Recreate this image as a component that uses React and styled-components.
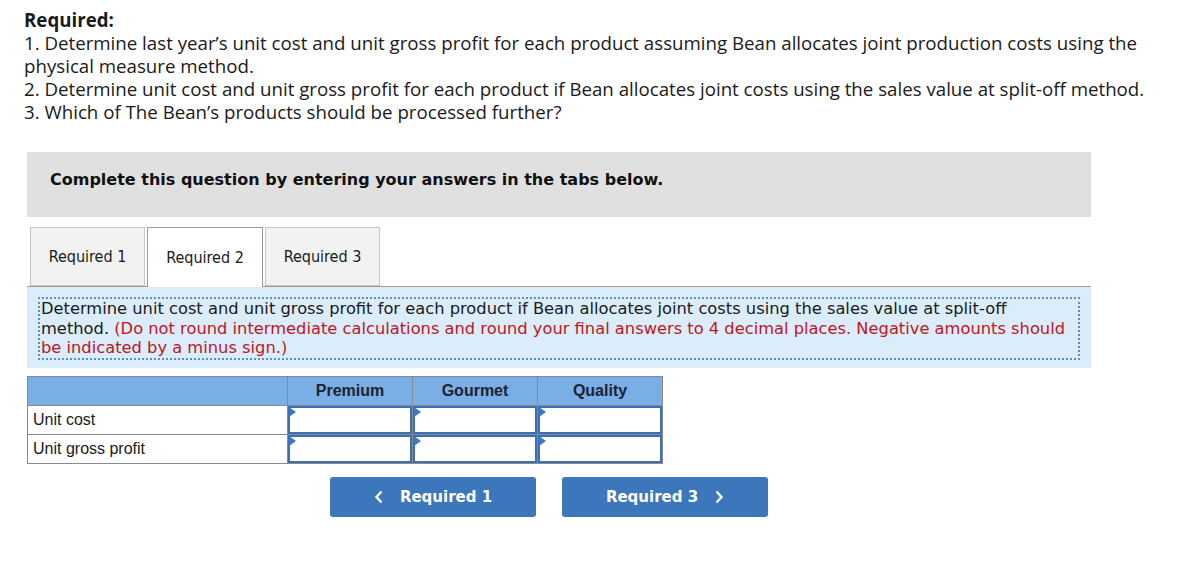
import React from 'react';
import styled, { createGlobalStyle } from 'styled-components';

const GlobalStyle = createGlobalStyle`
  html, body {
    margin: 0;
    background: #ffffff;
  }
  body {
    font-family: "Open Sans", "Lato", sans-serif;
    color: #1a1a1a;
  }
`;

const Page = styled.div`
  padding: 8px 0 0 24px;
`;

const Intro = styled.div`
  width: 1125px;
  font-family: "Open Sans", "Lato", sans-serif;
  font-size: 18.7px;
  line-height: 23px;
  color: #1a1a1a;
`;

const IntroTitle = styled.div`
  font-weight: 700;
`;

const Panel = styled.div`
  margin: 29px 0 0 3px;
  width: 1064px;
`;

const Banner = styled.div`
  background: #e0e0e0;
  height: 65px;
  box-sizing: border-box;
  display: flex;
  align-items: center;
  padding: 0 0 10px 23px;
  font-family: "DejaVu Sans", Verdana, sans-serif;
  font-weight: 700;
  font-size: 16px;
  color: #111;
`;

const TabBar = styled.div`
  display: flex;
  align-items: flex-end;
  gap: 2px;
  margin-top: 10px;
  padding-left: 3px;
  border-bottom: 1px solid #9a9a9a;
  height: 59px;
`;

const Tab = styled.div`
  width: ${(p) => (p.$active ? 116 : 115)}px;
  height: ${(p) => (p.$active ? 60 : 59)}px;
  margin-bottom: ${(p) => (p.$active ? -1 : 0)}px;
  box-sizing: border-box;
  display: flex;
  align-items: center;
  justify-content: center;
  background: ${(p) => (p.$active ? '#ffffff' : '#f2f2f2')};
  border: 1px solid ${(p) => (p.$active ? '#9a9a9a' : '#c6c6c6')};
  border-bottom: ${(p) => (p.$active ? 'none' : '1px solid #c6c6c6')};
  font-family: "DejaVu Sans Condensed", Tahoma, sans-serif;
  font-size: 16px;
  color: #1a1a1a;
  padding-bottom: 1px;
`;

const InfoBox = styled.div`
  background: #dbecfa;
  padding: 10px 11px 8px 11px;
`;

const Dotted = styled.div`
  border: 2px dotted #5a8fd2;
  padding: 0 0 0 1px;
  font-family: "DejaVu Sans", Verdana, sans-serif;
  font-size: 16.3px;
  line-height: 19.5px;
  color: #1a1a1a;
`;

const Note = styled.span`
  color: #c0161f;
`;

const Table = styled.table`
  margin-top: 8px;
  border-collapse: collapse;
  font-family: "Liberation Sans", Arial, sans-serif;
`;

const HeadCell = styled.th`
  background: #7aaee6;
  border: 1px solid #8a8a8a;
  height: 28px;
  width: ${(p) => p.$w}px;
  padding: 0;
  font-size: 16px;
  font-weight: 700;
  color: #1c2330;
  text-align: center;
`;

const LabelCell = styled.td`
  border: 1px solid #8a8a8a;
  height: 28px;
  padding: 0 0 0 5px;
  font-size: 16px;
  color: #1a1a1a;
`;

const InputCell = styled.td`
  border: 1px solid #8a8a8a;
  padding: 0;
  height: 28px;
`;

const Field = styled.div`
  position: relative;
  height: 28px;
  box-sizing: border-box;
  border: 2px solid #3a6fb3;
  background: #fff;

  &::before {
    content: '';
    position: absolute;
    left: -1px;
    top: -1px;
    border-top: 5px solid transparent;
    border-bottom: 5px solid transparent;
    border-left: 7px solid #3a78c4;
  }
`;

const Nav = styled.div`
  display: flex;
  gap: 26px;
  margin: 13px 0 0 303px;
`;

const NavButton = styled.button`
  width: 206px;
  height: 40px;
  border: none;
  border-radius: 3px;
  background: #3b77ba;
  color: #ffffff;
  font-family: "DejaVu Sans", Verdana, sans-serif;
  font-weight: 700;
  font-size: 15px;
  display: flex;
  align-items: center;
  justify-content: center;
  gap: 16px;
  padding: 0;
  cursor: pointer;
`;

const Chevron = ({ dir }) => (
  <svg width="10" height="14" viewBox="0 0 10 14">
    <path
      d={dir === 'left' ? 'M7.5 1.5 L2.5 7 L7.5 12.5' : 'M2.5 1.5 L7.5 7 L2.5 12.5'}
      fill="none"
      stroke="#fff"
      strokeWidth="2.4"
    />
  </svg>
);

const products = ['Premium', 'Gourmet', 'Quality'];
const rows = ['Unit cost', 'Unit gross profit'];

export default function App() {
  return (
    <>
      <GlobalStyle />
      <Page>
        <Intro>
          <IntroTitle>Required:</IntroTitle>
          <div>
            1. Determine last year’s unit cost and unit gross profit for each product assuming Bean allocates joint production costs using the physical measure method.
          </div>
          <div>
            2. Determine unit cost and unit gross profit for each product if Bean allocates joint costs using the sales value at split-off method.
          </div>
          <div>3. Which of The Bean’s products should be processed further?</div>
        </Intro>

        <Panel>
          <Banner>Complete this question by entering your answers in the tabs below.</Banner>

          <TabBar>
            <Tab>Required 1</Tab>
            <Tab $active>Required 2</Tab>
            <Tab>Required 3</Tab>
          </TabBar>

          <InfoBox>
            <Dotted>
              Determine unit cost and unit gross profit for each product if Bean allocates joint costs using the sales value at split-off method.{' '}
              <Note>
                (Do not round intermediate calculations and round your final answers to 4 decimal places. Negative amounts should be indicated by a minus sign.)
              </Note>
            </Dotted>
          </InfoBox>

          <Table>
            <thead>
              <tr>
                <HeadCell $w={259} />
                {products.map((p) => (
                  <HeadCell key={p} $w={124}>{p}</HeadCell>
                ))}
              </tr>
            </thead>
            <tbody>
              {rows.map((r) => (
                <tr key={r}>
                  <LabelCell>{r}</LabelCell>
                  {products.map((p) => (
                    <InputCell key={p}>
                      <Field />
                    </InputCell>
                  ))}
                </tr>
              ))}
            </tbody>
          </Table>

          <Nav>
            <NavButton>
              <Chevron dir="left" />
              Required 1
            </NavButton>
            <NavButton>
              Required 3
              <Chevron dir="right" />
            </NavButton>
          </Nav>
        </Panel>
      </Page>
    </>
  );
}
